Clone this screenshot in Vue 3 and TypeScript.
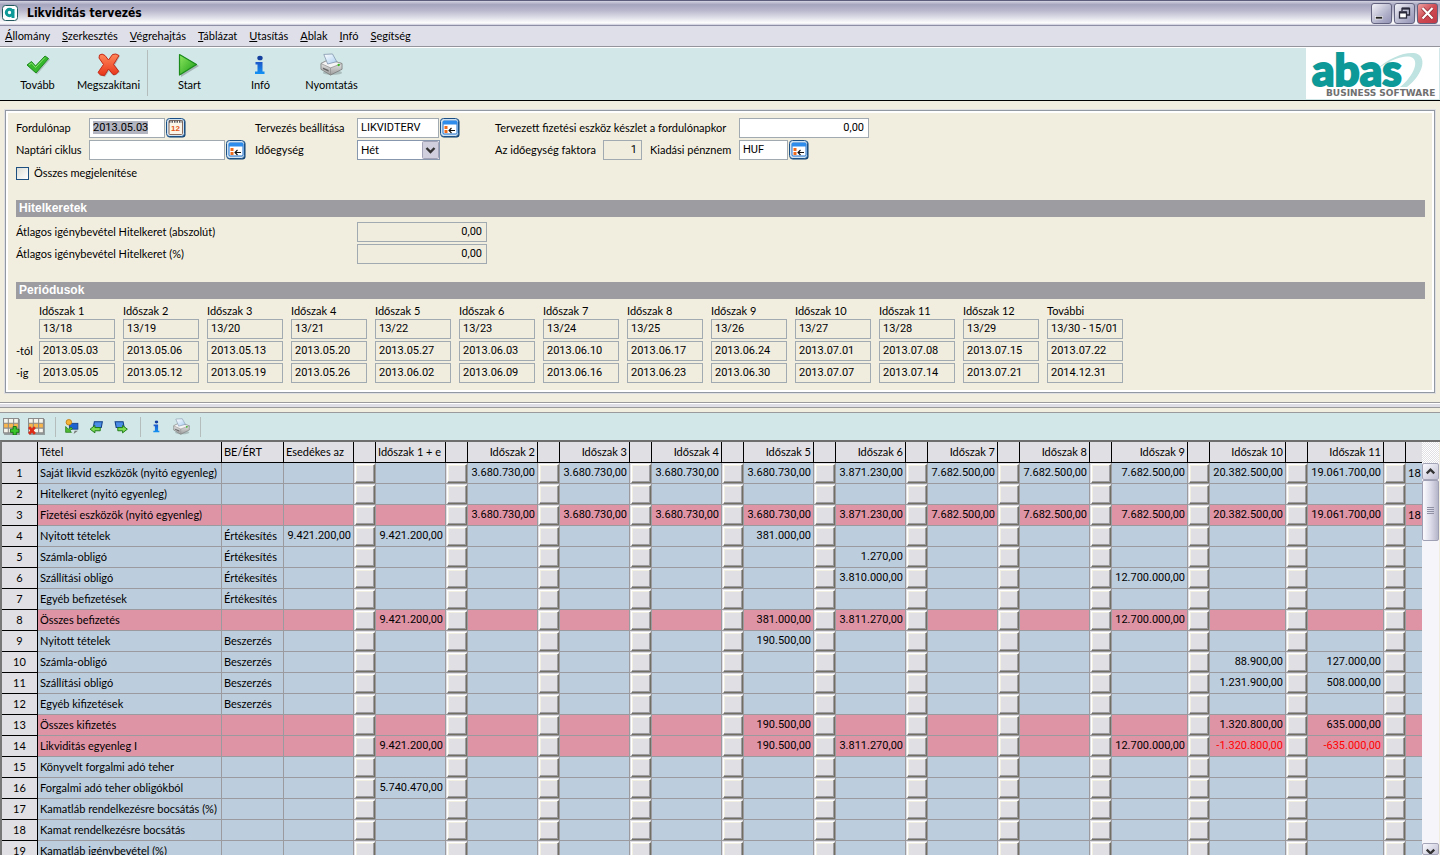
<script setup lang="ts">
import { onMounted, ref } from 'vue'

interface Row {
  label: string
  kind?: string
  due?: string
  total?: boolean
  values?: Record<number, string>
}

const menu: string[] = ['Állomány', 'Szerkesztés', 'Végrehajtás', 'Táblázat', 'Utasítás', 'Ablak', 'Infó', 'Segítség']

const periods = [
  { name: 'Időszak 1', week: '13/18', from: '2013.05.03', to: '2013.05.05' },
  { name: 'Időszak 2', week: '13/19', from: '2013.05.06', to: '2013.05.12' },
  { name: 'Időszak 3', week: '13/20', from: '2013.05.13', to: '2013.05.19' },
  { name: 'Időszak 4', week: '13/21', from: '2013.05.20', to: '2013.05.26' },
  { name: 'Időszak 5', week: '13/22', from: '2013.05.27', to: '2013.06.02' },
  { name: 'Időszak 6', week: '13/23', from: '2013.06.03', to: '2013.06.09' },
  { name: 'Időszak 7', week: '13/24', from: '2013.06.10', to: '2013.06.16' },
  { name: 'Időszak 8', week: '13/25', from: '2013.06.17', to: '2013.06.23' },
  { name: 'Időszak 9', week: '13/26', from: '2013.06.24', to: '2013.06.30' },
  { name: 'Időszak 10', week: '13/27', from: '2013.07.01', to: '2013.07.07' },
  { name: 'Időszak 11', week: '13/28', from: '2013.07.08', to: '2013.07.14' },
  { name: 'Időszak 12', week: '13/29', from: '2013.07.15', to: '2013.07.21' },
  { name: 'További', week: '13/30 - 15/01', from: '2013.07.22', to: '2014.12.31' },
]

const columns: string[] = [
  'Időszak 1 + e', 'Időszak 2', 'Időszak 3', 'Időszak 4', 'Időszak 5', 'Időszak 6',
  'Időszak 7', 'Időszak 8', 'Időszak 9', 'Időszak 10', 'Időszak 11', '',
]

const opening: Record<number, string> = {
  2: '3.680.730,00', 3: '3.680.730,00', 4: '3.680.730,00', 5: '3.680.730,00', 6: '3.871.230,00',
  7: '7.682.500,00', 8: '7.682.500,00', 9: '7.682.500,00', 10: '20.382.500,00', 11: '19.061.700,00', 12: '18',
}

const rows: Row[] = [
  { label: 'Saját likvid eszközök (nyitó egyenleg)', values: opening },
  { label: 'Hitelkeret (nyitó egyenleg)' },
  { label: 'Fizetési eszközök (nyitó egyenleg)', total: true, values: opening },
  { label: 'Nyitott tételek', kind: 'Értékesítés', due: '9.421.200,00', values: { 1: '9.421.200,00', 5: '381.000,00' } },
  { label: 'Számla-obligó', kind: 'Értékesítés', values: { 6: '1.270,00' } },
  { label: 'Szállítási obligó', kind: 'Értékesítés', values: { 6: '3.810.000,00', 9: '12.700.000,00' } },
  { label: 'Egyéb befizetések', kind: 'Értékesítés' },
  { label: 'Összes befizetés', total: true, values: { 1: '9.421.200,00', 5: '381.000,00', 6: '3.811.270,00', 9: '12.700.000,00' } },
  { label: 'Nyitott tételek', kind: 'Beszerzés', values: { 5: '190.500,00' } },
  { label: 'Számla-obligó', kind: 'Beszerzés', values: { 10: '88.900,00', 11: '127.000,00' } },
  { label: 'Szállítási obligó', kind: 'Beszerzés', values: { 10: '1.231.900,00', 11: '508.000,00' } },
  { label: 'Egyéb kifizetések', kind: 'Beszerzés' },
  { label: 'Összes kifizetés', total: true, values: { 5: '190.500,00', 10: '1.320.800,00', 11: '635.000,00' } },
  { label: 'Likviditás egyenleg I', total: true, values: { 1: '9.421.200,00', 5: '190.500,00', 6: '3.811.270,00', 9: '12.700.000,00', 10: '-1.320.800,00', 11: '-635.000,00' } },
  { label: 'Könyvelt forgalmi adó teher' },
  { label: 'Forgalmi adó teher obligókból', values: { 1: '5.740.470,00' } },
  { label: 'Kamatláb rendelkezésre bocsátás (%)' },
  { label: 'Kamat rendelkezésre bocsátás' },
  { label: 'Kamatláb igénybevétel (%)' },
]

const keyDate = ref<HTMLInputElement | null>(null)

onMounted(() => {
  keyDate.value?.focus()
  keyDate.value?.select()
})
</script>

<template>
  <div class="window">
    <svg class="defs" width="0" height="0" aria-hidden="true">
      <defs>
        <linearGradient id="gGreen" x1="0" y1="0" x2="1" y2="1">
          <stop offset="0" stop-color="#8fe860" />
          <stop offset="1" stop-color="#169a14" />
        </linearGradient>
        <linearGradient id="gRed" x1="0" y1="0" x2="0" y2="1">
          <stop offset="0" stop-color="#ff8a5c" />
          <stop offset="1" stop-color="#e8351a" />
        </linearGradient>
        <linearGradient id="gBlue" x1="0" y1="0" x2="0" y2="1">
          <stop offset="0" stop-color="#1c56c8" />
          <stop offset="1" stop-color="#1292f4" />
        </linearGradient>
        <linearGradient id="gGrey" x1="0" y1="0" x2="0" y2="1">
          <stop offset="0" stop-color="#fafafa" />
          <stop offset="1" stop-color="#9c9c9c" />
        </linearGradient>
        <linearGradient id="gPaper" x1="0" y1="0" x2="1" y2="1">
          <stop offset="0" stop-color="#ffffff" />
          <stop offset="1" stop-color="#a9cdf0" />
        </linearGradient>
        <symbol id="printer" viewBox="0 0 24 24">
          <ellipse cx="13" cy="20.500" rx="10" ry="2.500" fill="#000" opacity=".18" />
          <path d="M1 11 L9 7 L23 11 L23 17 L11 23 L1 17 Z" fill="url(#gGrey)" stroke="#777" stroke-width=".8" />
          <path d="M1 11 L9 7 L23 11 L11 15.500 Z" fill="#f4f4f4" stroke="#888" stroke-width=".7" />
          <path d="M4 1.500 L13 1 L17.500 9 L8 11.500 Z" fill="url(#gPaper)" stroke="#7f93aa" stroke-width=".8" />
          <path d="M11 15.500 V23" stroke="#8a8a8a" stroke-width=".7" />
          <path d="M3 15 L9 17.700 V19.500 L3 16.700 Z" fill="#666" />
          <circle cx="19.500" cy="12.500" r="1.200" fill="#38b820" />
        </symbol>
        <symbol id="info" viewBox="0 0 12 20">
          <ellipse cx="6" cy="3" rx="2.700" ry="2.300" fill="#153f9e" />
          <path d="M1.500 7 H8.500 V16.500 H10.500 V19 H1 V16.500 H3.500 V9.500 H1.500 Z" fill="url(#gBlue)" />
        </symbol>
        <symbol id="lookup" viewBox="0 0 20 20">
          <rect x="1" y="1" width="18.500" height="18.500" rx="3" fill="#0b3c6c" />
          <rect x=".5" y=".5" width="18" height="18" rx="3" fill="#cfe3f3" stroke="#1a4f86" />
          <rect x="3" y="3" width="14" height="13" rx="1" fill="#fff" stroke="#1c6fca" />
          <rect x="3" y="3" width="14" height="3.500" fill="#2e8cec" />
          <rect x="4.500" y="8" width="3" height="3" fill="#f06a1c" />
          <rect x="4.500" y="12" width="3" height="3" fill="#f06a1c" />
          <path d="M9 12.500 H15 M11.500 10 L9 12.500 L11.500 15" fill="none" stroke="#111" stroke-width="1.100" />
        </symbol>
        <symbol id="grid" viewBox="0 0 16 16">
          <rect x="1" y="1" width="15" height="15" fill="#555" opacity=".5" />
          <rect x="0" y="0" width="15" height="14.500" fill="#8b8b8b" />
          <path d="M1 1h3.500v3.500h-3.500z M5.500 1h4v3.500h-4z M10.500 1h3.500v3.500h-3.500z M1 10h3.500v3.500h-3.500z M5.500 10h4v3.500h-4z M10.500 10h3.500v3.500h-3.500z" fill="#f5f5ee" />
          <path d="M1 5.500h3.500v3.500h-3.500z M5.500 5.500h4v3.500h-4z M10.500 5.500h3.500v3.500h-3.500z" fill="#f9b64c" />
        </symbol>
      </defs>
    </svg>

    <header class="titlebar">
      <svg class="app-icon" viewBox="0 0 16 16" aria-hidden="true">
        <rect x=".5" y=".5" width="15" height="15" rx="3" fill="#fff" stroke="#22585e" />
        <circle cx="7.500" cy="7.500" r="3.200" fill="none" stroke="#0f9a9a" stroke-width="3" />
        <path d="M11 4 V13" stroke="#0f9a9a" stroke-width="3" />
      </svg>
      <h1>Likviditás tervezés</h1>
      <div class="window-buttons">
        <button type="button" aria-label="Kis méret">
          <svg viewBox="0 0 19 19"><rect x="3.500" y="12.500" width="7" height="2.500" fill="#222" stroke="#fff" stroke-width=".6" /></svg>
        </button>
        <button type="button" aria-label="Előző méret">
          <svg viewBox="0 0 19 19" fill="none" stroke="#2a2a3c" stroke-width="1.300">
            <path d="M7 7 V4.500 H14.500 V11 H12" /><path d="M7 4.500 H14.500" stroke-width="2" />
            <rect x="4.500" y="8" width="7" height="6" fill="#fff" /><path d="M4.500 8.500 H11.500" stroke-width="2" />
          </svg>
        </button>
        <button type="button" class="close" aria-label="Bezárás">
          <svg viewBox="0 0 19 19"><path d="M4.500 4 L14.500 14.500 M14.500 4 L4.500 14.500" stroke="#8c2a34" stroke-width="3.600" /><path d="M4.500 4 L14.500 14.500 M14.500 4 L4.500 14.500" stroke="#fff" stroke-width="2.200" /></svg>
        </button>
      </div>
    </header>

    <nav class="menubar">
      <button v-for="item in menu" :key="item" type="button"><u>{{ item[0] }}</u>{{ item.slice(1) }}</button>
    </nav>

    <div class="toolbar">
      <button type="button" class="tool">
        <svg viewBox="0 0 24 24"><path d="M2 13 L6.500 9.500 L10 13.500 L20 3.500 L24 6.500 L11 21.500 Z" fill="#000" opacity=".18" /><path d="M1 12 L5.500 8.500 L9.500 13 L19 3 L22.500 5.500 L10 20 Z" fill="#35b82c" stroke="#1d8a1d" stroke-linejoin="round" /><path d="M3 12 L5.500 10 L9.500 14.500 L19 4.500" fill="none" stroke="#8ae070" /></svg>
        Tovább
      </button>
      <button type="button" class="tool">
        <svg viewBox="0 0 24 24"><path d="M4 4 L9 4 L13 8 L17 2 L23 3 L18 12 L23 19 L17 23 L12 18 L8 24 L2 22 L8 13 Z" fill="#000" opacity=".2" /><path d="M2.500 2 Q5 0 8 2.500 L11.500 7 L15.500 1.500 Q19 0 22 2.500 L16.500 11.500 L21.500 18 Q20 22 16 21.500 L11.500 16 L7.500 22.500 Q3 23 1 19.500 L6.500 11.500 L2 5 Z" fill="url(#gRed)" stroke="#c42a18" stroke-linejoin="round" /></svg>
        Megszakítani
      </button>
      <span class="divider"></span>
      <button type="button" class="tool">
        <svg viewBox="0 0 24 24"><path d="M3 2 L21 13 L3 24 Z" fill="#000" opacity=".22" /><path d="M1.500 1.500 L18.500 11.500 L1.500 22 Z" fill="url(#gGreen)" stroke="#1b8c1c" stroke-width="1.200" stroke-linejoin="round" /></svg>
        Start
      </button>
      <button type="button" class="tool">
        <svg viewBox="0 0 24 24"><use href="#info" x="5" y="2" width="12" height="20" /></svg>
        Infó
      </button>
      <button type="button" class="tool">
        <svg viewBox="0 0 24 24"><use href="#printer" width="23" height="23" /></svg>
        Nyomtatás
      </button>
      <svg class="brand" viewBox="0 0 133 51" role="img" aria-label="abas Business Software">
        <rect width="133" height="51" fill="#fff" />
        <path d="M70 22 C82 10 98 4 108 5 C122 7 118 26 101 39 L94 39 C108 28 114 12 105 9 C97 7 84 12 70 22 Z" fill="#bfe3e0" />
        <text x="6" y="38" class="brand-name">abas</text>
        <text x="20" y="48" class="brand-sub">BUSINESS SOFTWARE</text>
      </svg>
    </div>

    <main>
      <section class="panel">
        <div class="fields">
          <label for="keydate">Fordulónap</label>
          <div class="cell">
            <input id="keydate" ref="keyDate" class="date" value="2013.05.03" />
            <button type="button" class="pick" aria-label="Naptár">
              <svg viewBox="0 0 20 20">
                <rect x="1" y="1" width="18.500" height="18.500" rx="3" fill="#0b3c6c" />
                <rect x=".5" y=".5" width="18" height="18" rx="3" fill="#cfe3f3" stroke="#1a4f86" />
                <rect x="3" y="2.500" width="13.500" height="14" rx="1" fill="#fbf4e8" stroke="#8c6a5c" />
                <path d="M3 3.500 H16.500" stroke="#5a5a62" stroke-width="2.500" stroke-dasharray="1.500 1" />
                <text x="5" y="13" class="day">12</text>
              </svg>
            </button>
          </div>
          <label for="plan">Tervezés beállítása</label>
          <div class="cell">
            <input id="plan" class="medium" value="LIKVIDTERV" />
            <button type="button" class="pick" aria-label="Beállítás keresése"><svg viewBox="0 0 20 20"><use href="#lookup" /></svg></button>
          </div>
          <label for="stock">Tervezett fizetési eszköz készlet a fordulónapkor</label>
          <div class="cell"><input id="stock" class="amount" value="0,00" /></div>

          <label for="cycle">Naptári ciklus</label>
          <div class="cell">
            <input id="cycle" class="long" />
            <button type="button" class="pick" aria-label="Ciklus keresése"><svg viewBox="0 0 20 20"><use href="#lookup" /></svg></button>
          </div>
          <label for="unit">Időegység</label>
          <div class="cell">
            <div class="select">
              <select id="unit"><option>Hét</option></select>
              <svg viewBox="0 0 17 18" aria-hidden="true"><rect x=".5" y=".5" width="16" height="17" rx="1" fill="#cfcfde" stroke="#a3a3b8" /><path d="M4.500 7 L8.500 11 L12.500 7" fill="none" stroke="#333" stroke-width="2.400" /></svg>
            </div>
          </div>
          <div class="cell pair">
            <label for="factor" class="factor-label">Az időegység faktora</label>
            <input id="factor" class="tiny" value="1" readonly />
            <label for="currency" class="currency-label">Kiadási pénznem</label>
          </div>
          <div class="cell">
            <input id="currency" class="short" value="HUF" />
            <button type="button" class="pick" aria-label="Pénznem keresése"><svg viewBox="0 0 20 20"><use href="#lookup" /></svg></button>
          </div>
        </div>
        <label class="check"><input type="checkbox" />Összes megjelenítése</label>

        <h2>Hitelkeretek</h2>
        <div class="credit">
          <label for="abs">Átlagos igénybevétel Hitelkeret (abszolút)</label>
          <input id="abs" class="amount" value="0,00" readonly />
          <label for="pct">Átlagos igénybevétel Hitelkeret (%)</label>
          <input id="pct" class="amount" value="0,00" readonly />
        </div>

        <h2>Periódusok</h2>
        <div class="periods">
          <div class="period side"><span></span><span></span><span>-tól</span><span>-ig</span></div>
          <div v-for="(p, i) in periods" :key="p.name" class="period">
            <label :for="'week' + i">{{ p.name }}</label>
            <input :id="'week' + i" :value="p.week" readonly />
            <input :value="p.from" :aria-label="p.name + ' -tól'" readonly />
            <input :value="p.to" :aria-label="p.name + ' -ig'" readonly />
          </div>
        </div>
      </section>
    </main>

    <div class="splitter"></div>

    <div class="tablebar">
      <button type="button" aria-label="Sor beszúrása"><svg viewBox="0 0 16 16"><use href="#grid" /><path d="M9.500 8h3v2.500h2.500v3h-2.500v2.500h-3v-2.500h-2.500v-3h2.500z" fill="#3cc62a" stroke="#0c6a0c" stroke-width=".8" /></svg></button>
      <button type="button" aria-label="Sor törlése"><svg viewBox="0 0 16 16"><use href="#grid" /><path d="M1 8.500 L6.500 15 M6.500 8.500 L1 15" stroke="#dc2b16" stroke-width="2.500" /></svg></button>
      <span class="divider"></span>
      <button type="button" aria-label="Áthelyezés"><svg viewBox="0 0 16 16"><rect x="6" y="5" width="8" height="5.500" fill="#1d63cf" stroke="#123f88" stroke-width=".8" /><path d="M11 12 L14 12 L10 15z" fill="#777" /><circle cx="5.500" cy="4" r="2.600" fill="#f5b43a" stroke="#c07c12" stroke-width=".8" /><path d="M2.500 8 V13.500 H8 L6.500 12 L9 10 L7.500 8.500 L5 10.500 Z" fill="#4fbb35" stroke="#217a18" stroke-width=".7" /></svg></button>
      <button type="button" aria-label="Előző"><svg viewBox="0 0 16 16"><path d="M6 3.500 H13.500 L12.500 9 H5 Z" fill="#4b8ee6" stroke="#123f88" /><path d="M2 10.500 L6.500 7 V9 H11.500 V12 H6.500 V14 Z" fill="#7ddc52" stroke="#1d7a18" stroke-width=".9" /></svg></button>
      <button type="button" aria-label="Következő"><svg viewBox="0 0 16 16"><path d="M2 3.500 H9.500 L10.500 9 H3 Z" fill="#4b8ee6" stroke="#123f88" /><path d="M13.500 10.500 L9 7 V9 H4.500 V12 H9 V14 Z" fill="#7ddc52" stroke="#1d7a18" stroke-width=".9" /></svg></button>
      <span class="divider"></span>
      <button type="button" aria-label="Infó"><svg viewBox="0 0 16 16"><use href="#info" x="4" y="2" width="8" height="12" /></svg></button>
      <button type="button" aria-label="Nyomtatás"><svg viewBox="0 0 16 16"><use href="#printer" width="16" height="16" /></svg></button>
      <span class="divider"></span>
    </div>

    <div class="sheet">
      <div class="viewport">
        <table>
          <colgroup>
            <col class="c-num" /><col class="c-label" /><col class="c-kind" /><col class="c-value" /><col class="c-btn" />
            <template v-for="(c, i) in columns" :key="i"><col :class="i < 8 ? 'c-value' : 'c-wide'" /><col class="c-btn" /></template>
          </colgroup>
          <thead>
            <tr>
              <th></th><th>Tétel</th><th>BE/ÉRT</th><th>Esedékes az</th><th></th>
              <template v-for="(c, i) in columns" :key="i"><th scope="col" :class="{ num: i > 0 }">{{ c }}</th><th></th></template>
            </tr>
          </thead>
          <tbody>
            <tr v-for="(r, n) in rows" :key="n" :class="{ total: r.total }">
              <th scope="row">{{ n + 1 }}</th>
              <td>{{ r.label }}</td>
              <td>{{ r.kind }}</td>
              <td class="num">{{ r.due }}</td>
              <td class="btn"><button type="button" :aria-label="'Részletek ' + (n + 1)"></button></td>
              <template v-for="(c, i) in columns" :key="i">
                <td :class="{ num: i < 11, negative: r.values?.[i + 1]?.startsWith('-') }">{{ r.values?.[i + 1] }}</td>
                <td class="btn"><button type="button" :aria-label="c + ' részletek ' + (n + 1)"></button></td>
              </template>
            </tr>
          </tbody>
        </table>
      </div>
      <div class="scrollbar">
        <span class="corner"></span>
        <button type="button" aria-label="Fel"><svg viewBox="0 0 16 16"><path d="M4 10 L8 6 L12 10" fill="none" stroke="#333" stroke-width="2.400" /></svg></button>
        <div class="track"><div class="thumb"><i></i><i></i><i></i><i></i></div></div>
        <button type="button" class="down" aria-label="Le"><svg viewBox="0 0 16 16"><path d="M4 6 L8 10 L12 6" fill="none" stroke="#333" stroke-width="2.400" /></svg></button>
      </div>
    </div>
  </div>
</template>

<style>
body {
  margin: 0;
  overflow: hidden;
}
</style>

<style scoped>
* {
  box-sizing: border-box;
}
.window {
  display: flex;
  flex-direction: column;
  height: 100vh;
  overflow: hidden;
  background: #f2eedf;
  color: #000;
  font: 11px/14px Lato, "Liberation Sans", Arial, sans-serif;
}
.defs {
  position: absolute;
}
button,
input,
select {
  margin: 0;
  padding: 0;
  border: 0;
  border-radius: 0;
  background: none;
  color: inherit;
  font: inherit;
}
button svg {
  display: block;
}
input:focus {
  outline: none;
}
input::selection {
  background: #b2b4bf;
  color: #000;
}

.titlebar {
  display: flex;
  flex: none;
  align-items: center;
  height: 26px;
  padding: 0 2px;
  border-top: 1px solid #5c5c7c;
  border-bottom: 1px solid #8e8ea6;
  background: linear-gradient(#d4d4e2 0, #a6a5bf 15%, #b9b8cd 40%, #e6e6ee 75%, #ffffff 92%, #c8c8d8 100%);
}
.app-icon {
  width: 16px;
  height: 16px;
  margin-right: 9px;
}
h1 {
  margin: 0;
  font: bold 12px/16px "DejaVu Sans Condensed", "DejaVu Sans", sans-serif;
}
.window-buttons {
  display: flex;
  gap: 2px;
  margin-left: auto;
}
.window-buttons button {
  width: 21px;
  height: 21px;
  border: 1px solid #63637f;
  border-radius: 3px;
  background: linear-gradient(135deg, #f2f2f8, #b3b3cc 60%, #9292b4);
}
.window-buttons .close {
  background: linear-gradient(135deg, #eda0a0, #cf4a52 50%, #c03a48);
}

.menubar {
  display: flex;
  flex: none;
  gap: 12px;
  height: 21px;
  padding: 0 5px;
  border-bottom: 1px solid #94949c;
  background: #dfdfe9;
}

.toolbar {
  display: flex;
  flex: none;
  height: 54px;
  padding-left: 2px;
  padding-right: 1px;
  border-top: 1px solid #fff;
  border-bottom: 1px solid #000;
  background: #d2e7e7;
}
.tool {
  display: flex;
  flex-direction: column;
  align-items: center;
  gap: 1px;
  width: 71px;
  padding-top: 5px;
}
.tool svg {
  width: 24px;
  height: 24px;
}
.divider {
  width: 1px;
  background: #b5bcbc;
}
.toolbar .divider {
  margin: 2px 6px 4px 3px;
}
.brand {
  width: 133px;
  height: 51px;
  margin-left: auto;
  overflow: visible;
}
.brand-name {
  fill: #0d9997;
  stroke: #0d9997;
  stroke-width: 2px;
  font: 900 44px Lato, sans-serif;
}
.brand-sub {
  fill: #707070;
  font: bold 9px "DejaVu Sans", sans-serif;
}

main {
  flex: none;
  padding: 9px 5px;
}
.panel {
  padding: 7px 8px 9px;
  border: 1px solid #9299a3;
  outline: 1px solid #dfdfe2;
  box-shadow: inset 0 0 0 2px #fff;
}
.fields {
  display: grid;
  grid-template-columns: 73px 166px 102px 138px 244px 1fr;
  gap: 2px 0;
  padding-left: 2px;
}
.fields label,
.credit label {
  align-self: center;
  white-space: nowrap;
}
.cell {
  display: flex;
  gap: 1px;
}
input {
  width: 76px;
  height: 20px;
  padding: 0 4px 1px 3px;
  border: 1px solid #a1a9b1;
  background: #fff;
  font-family: Roboto, "Liberation Sans", sans-serif;
}
input[readonly] {
  background: #f0eddf;
}
.medium {
  width: 82px;
}
.long {
  width: 136px;
}
.short {
  width: 49px;
}
.tiny {
  width: 39px;
  text-align: right;
}
.amount {
  width: 130px;
  text-align: right;
}
.pick,
.pick svg {
  width: 20px;
  height: 20px;
}
.day {
  fill: #e2551c;
  font: bold 8px "Liberation Sans", sans-serif;
}
.select {
  position: relative;
}
.select select {
  width: 83px;
  height: 20px;
  padding: 0 3px 1px;
  border: 1px solid #8798ae;
  background: #fff;
  appearance: none;
}
.select svg {
  position: absolute;
  top: 1px;
  right: 1px;
  width: 17px;
  height: 18px;
  pointer-events: none;
}
.pair {
  gap: 0;
}
.factor-label {
  width: 108px;
}
.currency-label {
  margin-left: 8px;
}
.check {
  display: flex;
  align-items: center;
  gap: 5px;
  width: max-content;
  margin: 6px 0 0 2px;
}
.check input {
  width: 13px;
  height: 13px;
  border: 1px solid #1d4f80;
  background: linear-gradient(135deg, #dcdcd7, #fff);
  appearance: none;
}
h2 {
  height: 17px;
  margin: 20px 1px 5px 2px;
  padding-left: 3px;
  background: #9d9ca1;
  color: #fff;
  font: bold 12px/17px "Liberation Sans", Arial, sans-serif;
}
.credit {
  display: grid;
  grid-template-columns: 341px 130px;
  gap: 2px 0;
  padding-left: 2px;
  margin-bottom: -2px;
}
.periods {
  display: flex;
  gap: 8px;
  padding-left: 2px;
}
.period {
  display: grid;
  grid-template-rows: 13px 20px 20px 20px;
  gap: 2px;
  width: 76px;
  line-height: 14px;
  white-space: nowrap;
}
.period.side {
  width: 15px;
}
.period.side span {
  align-self: center;
}

.splitter {
  flex: none;
  height: 11px;
  border-bottom: 1px solid #9a9a9c;
  background: linear-gradient(#9a9a9c 1px, #fff 1px, #fff 2px, #dfdee6 2px, #dfdee6 5px, #9a9a9c 5px, #9a9a9c 6px, #f2eedf 6px);
}
.tablebar {
  display: flex;
  flex: none;
  align-items: center;
  height: 27px;
  padding-left: 3px;
  background: #d2e7e7;
}
.tablebar button {
  width: 25px;
  height: 25px;
}
.tablebar button svg {
  width: 17px;
  height: 17px;
}
.tablebar .divider {
  height: 20px;
  margin: 0 7px 0 2px;
}

.sheet {
  display: flex;
  flex: 1;
  min-height: 0;
  padding-right: 1px;
  border-top: 2px solid #6e6e6e;
  border-left: 2px solid #777;
}
.viewport {
  flex: 1;
  min-width: 0;
  overflow: hidden;
}
table {
  width: 1px;
  table-layout: fixed;
  border-collapse: separate;
  border-spacing: 0;
}
.c-num {
  width: 36px;
}
.c-label {
  width: 184px;
}
.c-kind {
  width: 62px;
}
.c-value {
  width: 70px;
}
.c-btn {
  width: 22px;
}
.c-wide {
  width: 76px;
}
th,
td {
  height: 21px;
  padding: 0 2px;
  overflow: hidden;
  border-right: 1px solid #9b9b9f;
  border-bottom: 1px solid #9b9b9f;
  background: #bccddd;
  text-align: left;
  white-space: nowrap;
  font-weight: normal;
}
th {
  border-color: #000;
  background: #e0dfe3;
}
tbody th {
  text-align: center;
}
.num {
  text-align: right;
}
td.num {
  font-family: Roboto, "Liberation Sans", sans-serif;
}
.total td {
  background: #df94a5;
}
td.negative {
  color: #f00;
}
td.btn,
.total td.btn {
  padding: 0;
  background: #e0dfe3;
}
.btn button {
  display: block;
  width: 20px;
  height: 19px;
  margin-left: 1px;
  border: 1px solid;
  border-color: #fff #716f64 #716f64 #fff;
  box-shadow: inset -1px -1px #9d9da1, inset 1px 1px #f1efe2;
  background: #e0dfe3;
}

.scrollbar {
  display: flex;
  flex: none;
  flex-direction: column;
  width: 17px;
  background: #f6f6fa;
}
.corner {
  height: 21px;
  background: repeating-conic-gradient(#e0dfe3 0 25%, #fff 0 50%) 0 0 / 2px 2px;
}
.scrollbar button {
  flex: none;
  height: 17px;
  border: 1px solid #a5a5b8;
  border-radius: 2px;
  background: linear-gradient(135deg, #fafafe, #c0c0d4);
}
.scrollbar .down {
  height: 12px;
  overflow: hidden;
}
.scrollbar button svg {
  width: 15px;
  height: 15px;
}
.track {
  flex: 1;
  min-height: 0;
}
.thumb {
  display: flex;
  flex-direction: column;
  align-items: center;
  justify-content: center;
  gap: 1px;
  height: 61px;
  border: 1px solid #a0a0b4;
  border-radius: 2px;
  background: linear-gradient(90deg, #fbfbfe, #dcdcea 50%, #b6b6ca);
}
.thumb i {
  width: 7px;
  height: 1px;
  background: #9090a4;
}
</style>
